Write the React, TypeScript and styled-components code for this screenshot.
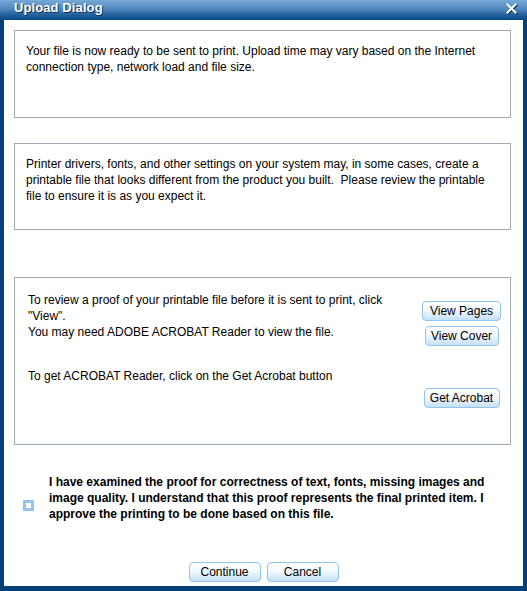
import React from "react";
import styled, { createGlobalStyle } from "styled-components";

const Global = createGlobalStyle`
  html, body { margin: 0; padding: 0; background: #ffffff; }
  body { font-family: "Liberation Sans", Arial, sans-serif; }
`;

const Dialog = styled.div`
  width: 527px;
  height: 591px;
  box-sizing: border-box;
  display: flex;
  flex-direction: column;
  background: #ffffff;
  border-left: 4px solid #043f75;
  border-right: 4px solid #043f75;
  border-bottom: 5px solid #043f75;
`;

const TitleBar = styled.div`
  height: 20px;
  margin: 0 -4px;
  padding: 0 10px 0 14px;
  box-sizing: border-box;
  display: flex;
  align-items: flex-start;
  justify-content: space-between;
  background: linear-gradient(#78a9d6 0%, #4f87bd 45%, #1a5a95 80%, #0a4a85 100%);
`;

const Title = styled.div`
  font-family: "Liberation Sans", Arial, sans-serif;
  font-weight: bold;
  font-size: 13px;
  line-height: 16px;
  color: #ffffff;
  text-shadow: 1px 1px 0 #0b2f55;
  letter-spacing: 0.1px;
`;

const CloseIcon = styled.svg`
  margin-top: 3px;
  filter: drop-shadow(1px 1px 0 #0b2f55);
`;

const Content = styled.div`
  flex: 1;
  display: flex;
  flex-direction: column;
  padding: 10px 12px 0 10px;
`;

const Panel = styled.div<{ $h: number; $mb: number }>`
  height: ${(p) => p.$h}px;
  margin-bottom: ${(p) => p.$mb}px;
  box-sizing: border-box;
  border: 1px solid #a3abb2;
  padding: 12px 11px;
  font-size: 12px;
  line-height: 16px;
  color: #000000;
`;

const ProofPanel = styled(Panel)`
  display: flex;
  justify-content: space-between;
  padding: 14px 9px 0 13px;
`;

const ProofText = styled.div`
  font-size: 12px;
  line-height: 16px;
  width: 370px;
`;

const Spaced = styled.div`
  margin-top: 28px;
`;

const ButtonColumn = styled.div`
  width: 79px;
  display: flex;
  flex-direction: column;
  align-items: center;
  padding-top: 9px;
`;

const Button = styled.button<{ $w: number; $mt?: number }>`
  width: ${(p) => p.$w}px;
  height: 20px;
  margin-top: ${(p) => p.$mt ?? 0}px;
  padding: 0;
  box-sizing: border-box;
  border: 1px solid #93c4ec;
  border-radius: 4px;
  background: linear-gradient(#ffffff 0%, #f3f9fe 45%, #c4e0f8 100%);
  font-family: "Liberation Sans", Arial, sans-serif;
  font-size: 12px;
  line-height: 18px;
  color: #000000;
`;

const AgreeRow = styled.div`
  display: flex;
  align-items: flex-start;
  padding-left: 9px;
  gap: 15px;
`;

const Check = styled.div`
  width: 11px;
  height: 11px;
  box-sizing: border-box;
  border: 3px solid #93c6ee;
  background: #ffffff;
  margin-top: 26px;
  flex-shrink: 0;
`;

const AgreeText = styled.div`
  font-size: 12px;
  font-weight: bold;
  line-height: 16px;
  color: #000000;
  width: 450px;
`;

const Footer = styled.div`
  display: flex;
  justify-content: center;
  gap: 6px;
  margin-top: 40px;
  margin-left: 2px;
`;

export default function App() {
  return (
    <>
      <Global />
      <Dialog>
        <TitleBar>
          <Title>Upload Dialog</Title>
          <CloseIcon width="11" height="11" viewBox="0 0 11 11">
            <path d="M1.5 1.5 L9.5 9.5 M9.5 1.5 L1.5 9.5" stroke="#ffffff" strokeWidth="2" strokeLinecap="square" />
          </CloseIcon>
        </TitleBar>
        <Content>
          <Panel $h={88} $mb={25}>
            Your file is now ready to be sent to print. Upload time may vary based on the Internet
            connection type, network load and file size.
          </Panel>
          <Panel $h={87} $mb={47}>
            Printer drivers, fonts, and other settings on your system may, in some cases, create a
            printable file that looks different from the product you built.&nbsp; Please review the printable
            file to ensure it is as you expect it.
          </Panel>
          <ProofPanel $h={168} $mb={29}>
            <ProofText>
              <div>To review a proof of your printable file before it is sent to print, click "View".</div>
              <div>You may need ADOBE ACROBAT Reader to view the file.</div>
              <Spaced>To get ACROBAT Reader, click on the Get Acrobat button</Spaced>
            </ProofText>
            <ButtonColumn>
              <Button $w={79}>View Pages</Button>
              <Button $w={74} $mt={5}>View Cover</Button>
              <Button $w={76} $mt={42}>Get Acrobat</Button>
            </ButtonColumn>
          </ProofPanel>
          <AgreeRow>
            <Check />
            <AgreeText>
              I have examined the proof for correctness of text, fonts, missing images and image
              quality. I understand that this proof represents the final printed item. I approve the
              printing to be done based on this file.
            </AgreeText>
          </AgreeRow>
          <Footer>
            <Button $w={72}>Continue</Button>
            <Button $w={72}>Cancel</Button>
          </Footer>
        </Content>
      </Dialog>
    </>
  );
}
